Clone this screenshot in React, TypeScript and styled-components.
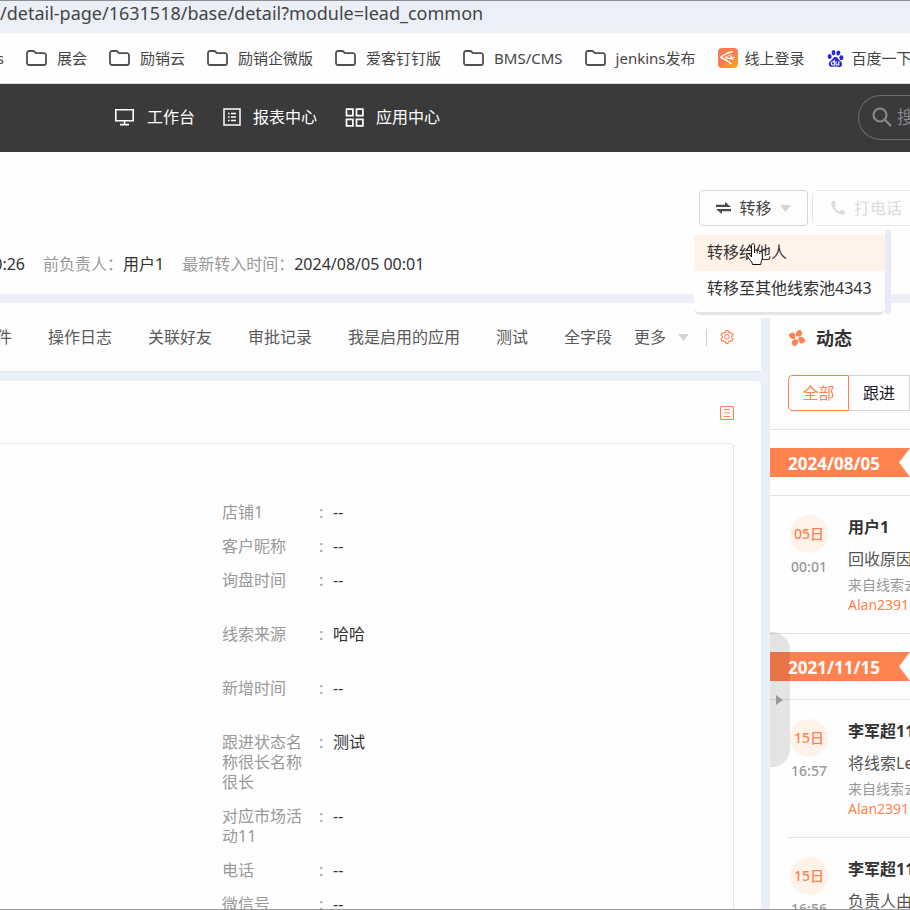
import React from "react";
import styled, { createGlobalStyle } from "styled-components";
import { AiOutlineSetting } from "react-icons/ai";
import { MdCall } from "react-icons/md";
import { SiBaidu } from "react-icons/si";

const ORANGE = "#ff8350";
const BAND = "#eaeff8";

const GlobalStyle = createGlobalStyle`
  *, *::before, *::after { box-sizing: border-box; }
  html, body { margin: 0; overflow: hidden; }
  body, button, input {
    font-family: "Noto Sans", "Noto Sans CJK SC", sans-serif;
    font-size: 16px;
    font-weight: 400;
  }
  body { color: #333; line-height: 20px; background: #fefefe; }
  button { padding: 0; border: 0; background: none; color: inherit; line-height: 20px; cursor: pointer; }
  a { color: inherit; text-decoration: none; }
  svg { display: block; flex: none; }
  dl, dt, dd, h2, h3, p, ul { margin: 0; padding: 0; }
  ul { list-style: none; }
`;

const Page = styled.div`
  height: 100vh;
  display: flex;
  flex-direction: column;
  overflow: hidden;
  white-space: nowrap;
  border-top: 1px solid #8b8d92;
  border-bottom: 1px solid #9a9a9a;
`;

const AddressBar = styled.div`
  flex: none;
  height: 32px;
  background: ${BAND};
  color: #454545;
  font-size: 18px;
  line-height: 24px;
`;

const Bookmarks = styled.nav`
  flex: none;
  height: 51px;
  display: flex;
  align-items: center;
  gap: 22px;
  border-bottom: 1px solid #dcdcdc;
  color: #454545;
  font-size: 15px;
`;

const Bookmark = styled.a<{ $gap?: number }>`
  flex: none;
  display: flex;
  align-items: center;
  gap: ${(p) => p.$gap ?? 10}px;
  font-size: 15px;
`;

const CutOff = styled.span<{ $width: number }>`
  flex: none;
  width: ${(p) => p.$width}px;
  display: flex;
  justify-content: flex-end;
  overflow: hidden;
`;

const AppNav = styled.header`
  flex: none;
  height: 68px;
  padding: 0 0 2px 114px;
  display: flex;
  align-items: center;
  gap: 28px;
  overflow: hidden;
  background: #3a3a3a;
  color: #fff;
`;

const NavItem = styled.a`
  display: flex;
  align-items: center;
  gap: 12px;
`;

const SearchBox = styled.label`
  flex: none;
  width: 52px;
  height: 45px;
  margin-left: auto;
  padding-left: 13px;
  display: flex;
  align-items: center;
  gap: 5px;
  overflow: hidden;
  border: 1px solid #6b6b6b;
  border-right: 0;
  border-radius: 23px 0 0 23px;
  color: #86868c;
`;

const SearchInput = styled.input`
  width: 120px;
  flex: none;
  padding: 0;
  border: 0;
  outline: 0;
  background: none;
  color: #fff;
  font-size: 18px;
  &::placeholder { color: #86868c; opacity: 1; }
`;

const Summary = styled.section`
  flex: none;
  height: 142px;
  padding-top: 38px;
`;

const Actions = styled.div`
  display: flex;
  justify-content: flex-end;
  align-items: center;
  gap: 4px;
  height: 36px;
`;

const Dropdown = styled.div`
  position: relative;
`;

const TransferButton = styled.button`
  width: 109px;
  height: 36px;
  display: flex;
  align-items: center;
  justify-content: center;
  gap: 8px;
  border: 1px solid #d6d6d6;
  border-radius: 4px;
  color: #444;
`;

const ActionDivider = styled.span`
  width: 1px;
  height: 26px;
  background: #e2e2e2;
`;

const CallButton = styled.button`
  width: 93px;
  height: 36px;
  padding-left: 12px;
  display: flex;
  align-items: center;
  gap: 7px;
  border-top: 1px solid #e8e8e8;
  border-bottom: 1px solid #e8e8e8;
  color: #dcdcdc;
`;

const Menu = styled.div`
  position: absolute;
  z-index: 2;
  top: 40px;
  left: -5px;
  width: 191px;
  padding: 5px 0;
  background: #fefefe;
  border-bottom: 3px solid #e4e4e4;
  border-radius: 0 0 6px 6px;
`;

const MenuItem = styled.button<{ $active?: boolean }>`
  width: 100%;
  height: 36px;
  padding: 0 13px 3px;
  display: block;
  text-align: left;
  color: #333;
  background: ${(p) => (p.$active ? "#fff2e8" : "transparent")};
`;

const MenuScroll = styled.span`
  position: absolute;
  z-index: 3;
  top: 40px;
  left: 186px;
  width: 6px;
  height: 84px;
  border-radius: 3px;
  background: #e8ebf5;
`;

const Pointer = styled.svg`
  position: absolute;
  z-index: 4;
  top: 53px;
  left: 47px;
`;

const Facts = styled.dl`
  margin-top: 28px;
  display: flex;
  gap: 18px;
`;

const Fact = styled.div`
  display: flex;
  dt { color: #999; }
`;

const Columns = styled.main`
  flex: 1;
  min-height: 0;
  display: flex;
  border-top: 9px solid ${BAND};
`;

const Detail = styled.div`
  flex: 1;
  min-width: 0;
  display: flex;
  flex-direction: column;
  background: ${BAND};
`;

const Gutter = styled.div`
  flex: none;
  width: 9px;
  margin-top: 15px;
  background: ${BAND};
`;

const Tabs = styled.nav`
  flex: none;
  height: 69px;
  padding-right: 26px;
  display: flex;
  align-items: center;
  justify-content: space-between;
  background: #fefefe;
  border-bottom: 1px solid #e2e2e2;
  color: #595959;
`;

const TabList = styled.div`
  flex: none;
  display: flex;
  gap: 36px;
`;

const TabTools = styled.div`
  flex: none;
  display: flex;
  align-items: center;
  gap: 12px;
`;

const MoreButton = styled.button`
  display: flex;
  align-items: center;
  gap: 12px;
`;

const ToolDivider = styled.span`
  width: 1px;
  height: 17px;
  margin-left: 5px;
  background: #d0d0d0;
`;

const IconButton = styled.button`
  flex: none;
  color: ${ORANGE};
`;

const Panel = styled.section`
  flex: 1;
  min-height: 0;
  margin-top: 9px;
  padding-right: 27px;
  display: flex;
  flex-direction: column;
  overflow: hidden;
  background: #fefefe;
  border-radius: 0 4px 0 0;
`;

const PanelBar = styled.div`
  flex: none;
  height: 62px;
  padding-top: 2px;
  display: flex;
  justify-content: flex-end;
  align-items: center;
`;

const FieldBox = styled.div`
  flex: 1;
  padding: 51px 0 0 222px;
  border-top: 1px solid #e6e6e6;
  border-right: 1px solid #e6e6e6;
  border-radius: 0 4px 0 0;
`;

const Field = styled.div<{ $tall?: boolean }>`
  display: flex;
  padding: 7px 0;
  min-height: ${(p) => (p.$tall ? 54 : 34)}px;
  dt { width: 97px; padding-right: 16px; color: #999; white-space: normal; }
  dd { color: #333; }
`;

const Colon = styled.span`
  width: 14px;
  color: #999;
`;

const Feed = styled.aside`
  position: relative;
  flex: none;
  width: 140px;
  overflow: hidden;
  background: #fefefe;
`;

const FeedTitle = styled.h2`
  height: 72px;
  padding: 0 18px 2px;
  display: flex;
  align-items: center;
  gap: 10px;
  font-size: 18px;
  font-weight: 700;
  color: #333;
`;

const Filters = styled.div`
  width: max-content;
  margin: 0 0 18px 18px;
  display: flex;
`;

const FilterButton = styled.button<{ $active?: boolean }>`
  width: 61px;
  height: 36px;
  border: 1px solid ${(p) => (p.$active ? ORANGE : "#d4d4d4")};
  border-left-width: ${(p) => (p.$active ? 1 : 0)}px;
  border-radius: ${(p) => (p.$active ? "4px 0 0 4px" : "0")};
  color: ${(p) => (p.$active ? ORANGE : "#1c1c2c")};
`;

const DayHeader = styled.div`
  padding: 18px 0;
  border-top: 1px solid #e4e4e4;
`;

const Ribbon = styled.h3`
  height: 29px;
  padding-left: 18px;
  background: ${ORANGE};
  clip-path: polygon(0 0, 100% 0, 129px 50%, 100% 100%, 0 100%);
  color: #fff;
  font-size: 17px;
  font-weight: 700;
  line-height: 31px;
`;

const Entry = styled.li<{ $first?: boolean }>`
  height: 138px;
  margin-left: ${(p) => (p.$first ? 0 : 18)}px;
  padding-left: ${(p) => (p.$first ? 18 : 0)}px;
  display: flex;
  gap: 18px;
  border-top: 1px solid #e4e4e4;
`;

const When = styled.div`
  flex: none;
  width: 42px;
  padding-top: 19px;
  display: flex;
  flex-direction: column;
  align-items: center;
  gap: 4px;
  color: #999;
  font-size: 14px;
  font-weight: 500;
`;

const DayBadge = styled.span`
  width: 38px;
  height: 38px;
  border-radius: 50%;
  background: #fff2e8;
  color: ${ORANGE};
  line-height: 38px;
  text-align: center;
`;

const Story = styled.div`
  padding-top: 21px;
  color: #555;
`;

const Author = styled.p`
  color: #333;
  font-weight: 700;
`;

const Action = styled.p`
  margin: 12px 0 6px;
`;

const Origin = styled.p`
  color: #999;
  font-size: 14px;
`;

const Customer = styled.a`
  display: block;
  color: ${ORANGE};
  font-size: 14px;
`;

const CollapseHandle = styled.button`
  position: absolute;
  z-index: 1;
  top: 329px;
  left: 0;
  width: 20px;
  height: 135px;
  padding-left: 6px;
  border-radius: 0 18px 18px 0;
  background: rgba(0, 0, 0, 0.1);
`;

const FolderIcon = () => (
  <svg width="21" height="16" viewBox="0 0 21 16" fill="none" stroke="#505050" strokeWidth="1.8">
    <path d="M1 3a2 2 0 0 1 2-2h4.600l2.400 2.200H18a2 2 0 0 1 2 2V13a2 2 0 0 1-2 2H3a2 2 0 0 1-2-2z" />
  </svg>
);

const Caret = () => (
  <svg width="11" height="7" viewBox="0 0 11 7" fill="#d4d4d4">
    <path d="M0 0h11L5.500 7z" />
  </svg>
);

const MonitorIcon = () => (
  <svg width="21" height="18" viewBox="0 0 21 18" fill="none" stroke="#fff" strokeWidth="1.600">
    <path d="M1.800 1.800h17.400v11H1.800zM10.500 13v3.500M6 16.600h9" />
  </svg>
);

const ReportIcon = () => (
  <svg width="18" height="18" viewBox="0 0 18 18" fill="none" stroke="#fff" strokeWidth="1.500">
    <path d="M1 1h16v16H1zM8 5.500h5M8 9h5M8 12.500h5M5 5.500h1.600M5 9h1.600M5 12.500h1.600" />
  </svg>
);

const GridIcon = () => (
  <svg width="19" height="19" viewBox="0 0 19 19" fill="none" stroke="#fff" strokeWidth="1.700">
    <path d="M1.500 1.200h6.400v6.400H1.500zM11.500 1.200h6.400v6.400h-6.400zM1.500 11.400h6.400v6.400H1.500zM11.500 11.400h6.400v6.400h-6.400z" />
  </svg>
);

const SearchIcon = () => (
  <svg width="20" height="20" viewBox="0 0 20 20" fill="none" stroke="currentColor" strokeWidth="2.200">
    <circle cx="8" cy="8" r="6.500" />
    <path d="M12.600 12.600L19 19" />
  </svg>
);

const SwapIcon = () => (
  <svg width="15" height="12" viewBox="0 0 15 12" fill="#4a4a4a">
    <path d="M0 2.800h9V0l6 5H0zM15 9.200H6V12L0 7h15z" />
  </svg>
);

const LoginLogo = () => (
  <svg width="20" height="20" viewBox="0 0 20 20">
    <defs>
      <linearGradient id="login" x1="0" y1="0" x2="1" y2="1">
        <stop offset="0.500" stopColor="#fb7b4f" />
        <stop offset="1" stopColor="#fbab22" />
      </linearGradient>
    </defs>
    <rect width="20" height="20" rx="4" fill="url(#login)" />
    <path
      d="M15 3.500C10.500 4.600 6 6.400 2.800 9.200c3.800 1.800 7 3.800 10.400 6.600M7 9.200c3.600 1.800 6.600 1.800 9.600-.2M12.800 8l1.800 4"
      fill="none"
      stroke="#fff"
      strokeWidth="1.500"
      strokeLinejoin="round"
    />
    <path d="M14 6.500L7 9.200" stroke="#ffd9c6" strokeWidth="1" />
  </svg>
);

const PinwheelIcon = () => (
  <svg width="18" height="18" viewBox="-9 -9 18 18" fill={ORANGE}>
    {[20, 110, 200, 290].map((angle) => (
      <path
        key={angle}
        transform={`rotate(${angle})`}
        d="M-1.600-1.400C-3.600-4.400-2.600-7.600.6-9c.4 1.200 2.600 1.400 3 3 .5 2.200-1.800 4.300-5.200 4.600z"
      />
    ))}
  </svg>
);

const NoteIcon = () => (
  <svg width="14" height="14" viewBox="0 0 14 14" fill="none" stroke="currentColor">
    <rect x="0.500" y="0.500" width="13" height="13" rx="1.500" strokeWidth="1.200" />
    <path d="M4 3.500h6M4 10.500h6" />
    <path d="M4 7h6" stroke="#f3cfa0" strokeWidth="2" />
  </svg>
);

const HandPointer = () => (
  <Pointer width="17" height="23" viewBox="0 0 17 23" fill="#fff" stroke="#111" strokeLinejoin="round">
    <path d="M5.500 14V2.500C5.500 0 8.500 0 8.500 2.500V8c0-1.500 2.700-1.500 2.700.5 0-1.500 2.600-1.300 2.600.7 0-1.200 2.500-1 2.500 1V15c0 2-1.500 3-1.500 6.500H6.500C6.500 19 3.500 17 1 12.500c-1-2 1.500-2.500 2.500-1z" />
    <path d="M8.500 8v2M11.200 8.500v2M13.800 9.500v1.500" fill="none" />
  </Pointer>
);

const folders = ["展会", "励销云", "励销企微版", "爱客钉钉版", "BMS/CMS", "jenkins发布"];
const tabs = ["操作日志", "关联好友", "审批记录", "我是启用的应用", "测试", "全字段"];

const fields = [
  { label: "店铺1", value: "--" },
  { label: "客户昵称", value: "--" },
  { label: "询盘时间", value: "--", tall: true },
  { label: "线索来源", value: "哈哈", tall: true },
  { label: "新增时间", value: "--", tall: true },
  { label: "跟进状态名称很长名称很长", value: "测试" },
  { label: "对应市场活动11", value: "--" },
  { label: "电话", value: "--" },
  { label: "微信号", value: "--" },
];

const days = [
  {
    date: "2024/08/05",
    entries: [{ day: "05日", time: "00:01", author: "用户1", action: "回收原因" }],
  },
  {
    date: "2021/11/15",
    entries: [
      { day: "15日", time: "16:57", author: "李军超11", action: "将线索Lead" },
      { day: "15日", time: "16:56", author: "李军超11", action: "负责人由" },
    ],
  },
];

export default function App() {
  return (
    <Page>
      <GlobalStyle />
      <AddressBar>/detail-page/1631518/base/detail?module=lead_common</AddressBar>
      <Bookmarks>
        <CutOff $width={4}>s</CutOff>
        {folders.map((name) => (
          <Bookmark href="#" key={name}>
            <FolderIcon />
            {name}
          </Bookmark>
        ))}
        <Bookmark href="#" $gap={7}>
          <LoginLogo />
          线上登录
        </Bookmark>
        <Bookmark href="#" $gap={8}>
          <SiBaidu size={17} color="#2428dc" />
          百度一下
        </Bookmark>
      </Bookmarks>
      <AppNav>
        <NavItem href="#"><MonitorIcon />工作台</NavItem>
        <NavItem href="#"><ReportIcon />报表中心</NavItem>
        <NavItem href="#"><GridIcon />应用中心</NavItem>
        <SearchBox>
          <SearchIcon />
          <SearchInput type="text" placeholder="搜索" aria-label="搜索" />
        </SearchBox>
      </AppNav>
      <Summary>
        <Actions>
          <Dropdown>
            <TransferButton type="button"><SwapIcon />转移<Caret /></TransferButton>
            <Menu>
              <MenuItem type="button" $active>转移给他人</MenuItem>
              <MenuItem type="button">转移至其他线索池4343</MenuItem>
            </Menu>
            <MenuScroll />
            <HandPointer />
          </Dropdown>
          <ActionDivider />
          <CallButton type="button" disabled><MdCall size={18} />打电话</CallButton>
        </Actions>
        <Facts>
          <CutOff as="div" $width={25}><dd>0:26</dd></CutOff>
          <Fact><dt>前负责人：</dt><dd>用户1</dd></Fact>
          <Fact><dt>最新转入时间：</dt><dd>2024/08/05 00:01</dd></Fact>
        </Facts>
      </Summary>
      <Columns>
        <Detail>
          <Tabs>
            <TabList>
              <CutOff $width={12}>件</CutOff>
              {tabs.map((name) => <a href="#" key={name}>{name}</a>)}
            </TabList>
            <TabTools>
              <MoreButton type="button">更多<Caret /></MoreButton>
              <ToolDivider />
              <IconButton type="button" aria-label="设置"><AiOutlineSetting size={16} /></IconButton>
            </TabTools>
          </Tabs>
          <Panel>
            <PanelBar>
              <IconButton type="button" aria-label="布局"><NoteIcon /></IconButton>
            </PanelBar>
            <FieldBox>
              <dl>
                {fields.map((f) => (
                  <Field key={f.label} $tall={f.tall}>
                    <dt>{f.label}</dt>
                    <Colon>:</Colon>
                    <dd>{f.value}</dd>
                  </Field>
                ))}
              </dl>
            </FieldBox>
          </Panel>
        </Detail>
        <Gutter />
        <Feed>
          <FeedTitle><PinwheelIcon />动态</FeedTitle>
          <Filters>
            <FilterButton type="button" $active>全部</FilterButton>
            <FilterButton type="button">跟进</FilterButton>
          </Filters>
          {days.map((d) => (
            <section key={d.date}>
              <DayHeader><Ribbon>{d.date}</Ribbon></DayHeader>
              <ul>
                {d.entries.map((e, i) => (
                  <Entry key={e.time} $first={i === 0}>
                    <When><DayBadge>{e.day}</DayBadge>{e.time}</When>
                    <Story>
                      <Author>{e.author}</Author>
                      <Action>{e.action}</Action>
                      <Origin>来自线索去</Origin>
                      <Customer href="#">Alan2391</Customer>
                    </Story>
                  </Entry>
                ))}
              </ul>
            </section>
          ))}
          <CollapseHandle type="button" aria-label="收起">
            <svg width="7" height="10" viewBox="0 0 7 10" fill="#999"><path d="M0 0l7 5-7 5z" /></svg>
          </CollapseHandle>
        </Feed>
      </Columns>
    </Page>
  );
}
